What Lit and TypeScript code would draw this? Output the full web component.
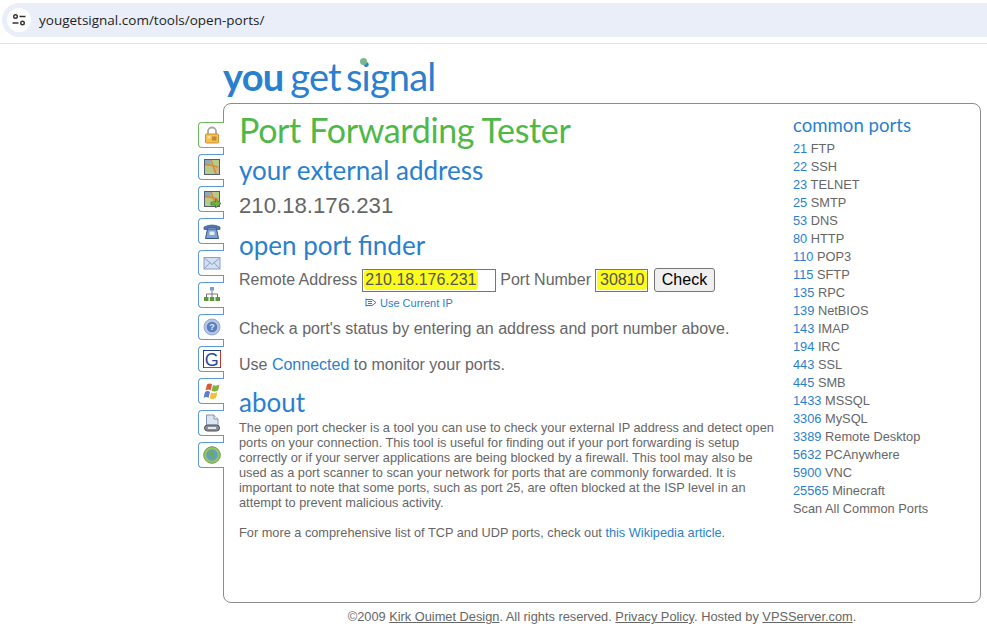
import { LitElement, html, css, svg } from 'lit';
import { customElement } from 'lit/decorators.js';

const PORTS: [string, string][] = [
  ['21', 'FTP'], ['22', 'SSH'], ['23', 'TELNET'], ['25', 'SMTP'], ['53', 'DNS'], ['80', 'HTTP'],
  ['110', 'POP3'], ['115', 'SFTP'], ['135', 'RPC'], ['139', 'NetBIOS'], ['143', 'IMAP'], ['194', 'IRC'],
  ['443', 'SSL'], ['445', 'SMB'], ['1433', 'MSSQL'], ['3306', 'MySQL'], ['3389', 'Remote Desktop'],
  ['5632', 'PCAnywhere'], ['5900', 'VNC'], ['25565', 'Minecraft'],
];

const MAP = svg`
  <rect x="1.500" y="1.500" width="15" height="15" fill="#b9c98a" stroke="#4f5f6f"/>
  <path d="M2 2h6l-1 5-5 1z" fill="#8fa8c8"/>
  <path d="M10 10l6-1v7h-5z" fill="#c9b48a"/>
  <path d="M2 6l13 3M8 2l5 14" fill="none" stroke="#d98a3a" stroke-width="1.500"/>
`;

const ICONS = [
  svg`<path d="M5 9V5.500a4 4 0 0 1 8 0V9" fill="none" stroke="#a8a8a8" stroke-width="1.800"/><rect x="2.500" y="8" width="13" height="9" rx="1" fill="#f6c050" stroke="#d0922c"/><rect x="4.500" y="10" width="3" height="2.500" fill="#fbe3a8"/><rect x="9" y="10.500" width="4.500" height="4" fill="#c08a30"/>`,
  MAP,
  svg`${MAP}<path d="M8 12h4.500V9l5.500 4.500L12.500 18v-3H8z" fill="#74b53f" stroke="#3f7a22" stroke-width=".7"/>`,
  svg`<path d="M1 7.500V5q8-4 16 0v2.500h-4V6H5v1.500z" fill="#4f78b0" stroke="#34578a" stroke-width=".7"/><path d="M4.500 7h9l2 9.500h-13z" fill="#7fa2d0" stroke="#34578a"/><rect x="6.500" y="9.500" width="5" height="3.500" fill="#e3ecf8"/>`,
  svg`<rect x="1" y="3.500" width="16" height="11.500" fill="#d3dff2" stroke="#8ba0c0"/><path d="M1.500 4l7.500 6.500L16.500 4M1.500 14.500l5.500-6M16.500 14.500l-5.500-6" fill="none" stroke="#8ba0c0"/>`,
  svg`<rect x="7" y="1" width="4" height="3.500" fill="#7f9bc0"/><path d="M9 4.500V8M3.500 11V8h11v3M9 8v3" fill="none" stroke="#777"/><rect x="1" y="11" width="4.500" height="4" fill="#5a9a3c"/><rect x="6.800" y="11" width="4.500" height="4" fill="#5a9a3c"/><rect x="12.500" y="11" width="4.500" height="4" fill="#5a9a3c"/>`,
  svg`<circle cx="9" cy="9" r="8" fill="#b4c6e6" stroke="#96abd2"/><circle cx="9" cy="9" r="5.300" fill="#5b7cc0"/><text x="9" y="12.300" font-size="9" font-weight="700" text-anchor="middle" fill="#e8eefa" font-family="Liberation Sans">?</text>`,
  svg`<rect x=".5" y=".5" width="17" height="17" fill="#fff" stroke="#23408f"/><path d="M17.500 1v16" stroke="#c0392b"/><path d="M1 17.500h16" stroke="#2d8a3a"/><text x="8.800" y="15.500" font-size="18" text-anchor="middle" fill="#2b4a9a" font-family="Liberation Sans">G</text>`,
  svg`<path d="M4 2.500q3-2 5 0L7.500 8.500q-2-2-5 0z" fill="#d9573a"/><path d="M10 3q3 1.500 6.500-.5L15 8.500q-3 1.500-6.500.5z" fill="#7fb23c"/><path d="M2 10q3-2 5 0l-1.500 6q-2-2-5 0z" fill="#5a7fc8"/><path d="M8 10.500q3 1.500 6.500-.5L13 16q-3 1.500-6.500.5z" fill="#f0c23a"/>`,
  svg`<path d="M3.500 1h7.500l4 4v8.500H3.500z" fill="#dbe5f3" stroke="#7f93b3"/><path d="M11 1v4h4" fill="#f2f6fb" stroke="#7f93b3"/><rect x="1.500" y="11" width="15" height="6" rx="3" fill="#8a8f96" stroke="#4a4f56"/><rect x="5" y="13" width="8" height="2" fill="#e5e7ea"/>`,
  svg`<circle cx="9" cy="9" r="8.300" fill="#96c564" stroke="#6f9f48"/><circle cx="9" cy="9" r="5.800" fill="#5f9fc8"/><path d="M6 5.500q3-2 5 0l-1 3 2 3-3 2-1-4-2.500-1z" fill="#6fae4a"/>`,
];

@customElement('app-root')
export class AppRoot extends LitElement {
  static styles = css`
    :host {
      display: block;
      width: 987px;
      height: 632px;
      overflow: hidden;
      background: #fff;
      color: #666;
      font-family: 'Liberation Sans', Arial, sans-serif;
      font-size: 16px;
    }

    a { color: #2a7fcf; text-decoration: none; }

    .browser-bar {
      height: 44px;
      box-sizing: border-box;
      padding: 3px 0 0 2px;
      border-bottom: 1px solid #e3e3e3;
    }

    .url {
      display: flex;
      align-items: center;
      gap: 8px;
      height: 34px;
      box-sizing: border-box;
      padding-left: 5px;
      border-radius: 17px 0 0 17px;
      background: #e9eef8;
      color: #1f1f1f;
      font-family: 'Open Sans', sans-serif;
      font-size: 13.5px;
    }

    .url-icon {
      display: flex;
      align-items: center;
      justify-content: center;
      width: 24px;
      height: 24px;
      border-radius: 50%;
      background: #fff;
    }

    .logo {
      margin: 9px 0 0 223px;
      height: 50px;
      font-family: Lato, sans-serif;
      font-size: 38px;
      line-height: 47px;
      color: #2a7fcf;
      letter-spacing: -0.8px;
      white-space: nowrap;
    }

    .logo b { font-weight: 700; margin-right: 7px; }
    .logo span + span { margin-left: 5px; }

    .signal { position: relative; }

    .signal::after {
      content: '';
      position: absolute;
      left: 14px;
      top: 5px;
      width: 7px;
      height: 7px;
      border-radius: 50%;
      background: #7ab88a;
    }

    .shell {
      display: flex;
      margin-left: 198px;
      width: 783px;
    }

    .tabs {
      display: flex;
      flex-direction: column;
      gap: 6px;
      width: 25px;
      padding-top: 19px;
    }

    .tab {
      display: flex;
      align-items: center;
      justify-content: center;
      width: 26px;
      height: 26px;
      box-sizing: border-box;
      border: 1px solid #5b9bd8;
      border-right: none;
      border-radius: 4px 0 0 4px;
      background: #fff;
      position: relative;
      z-index: 1;
    }

    .tab.active { border-color: #6cbb5a; }

    .panel {
      display: flex;
      width: 758px;
      height: 500px;
      box-sizing: border-box;
      border: 1px solid #8c8c8c;
      border-radius: 8px;
      padding: 0 0 0 15px;
    }

    .main { width: 554px; }

    h1, h2 {
      margin: 0;
      font-family: Lato, sans-serif;
      font-weight: 400;
    }

    h1 {
      color: #4fb848;
      font-size: 34px;
      line-height: 40px;
      margin-top: 6px;
      letter-spacing: -0.35px;
    }

    h2 {
      color: #2a7fcf;
      font-size: 26px;
      line-height: 32px;
    }

    h2.first { margin-top: 4px; }

    .ip { font-size: 22.2px; line-height: 34px; margin-top: 3px; }
    .finder { margin-top: 6px; }

    .form {
      display: flex;
      align-items: center;
      gap: 4px;
      margin-top: 7px;
      height: 24px;
      white-space: nowrap;
    }

    .field {
      height: 23px;
      box-sizing: border-box;
      border: 1px solid #767676;
      padding: 0 1px;
      color: #333;
      line-height: 19px;
    }

    .field.address { width: 134px; margin-left: 1px; }
    .field.port { width: 53px; }

    .field mark {
      display: inline-block;
      height: 20px;
      background: #fbfb1e;
      color: #555;
      padding: 0 1px;
      border-radius: 4px;
    }

    .field.port mark { padding: 0 3px; }

    button {
      height: 24px;
      width: 61px;
      padding: 0;
      margin-left: 2px;
      border: 1px solid #767676;
      border-radius: 3px;
      background: #efefef;
      color: #000;
      font: inherit;
    }

    .current {
      display: flex;
      align-items: center;
      gap: 3px;
      margin: 3px 0 0 126px;
      height: 15px;
      font-size: 11px;
    }

    p { margin: 0; }

    .status { margin-top: 9px; line-height: 20px; }
    .monitor { margin-top: 16px; line-height: 20px; }
    .about { margin-top: 11px; }

    .copy {
      font-size: 12.75px;
      line-height: 15px;
      width: 540px;
      margin-top: 2px;
    }

    .copy + .copy { margin-top: 15px; }

    .side { padding-top: 10px; }

    .side h3 {
      margin: 0 0 4px;
      font-family: Lato, sans-serif;
      font-weight: 400;
      font-size: 18.6px;
      line-height: 22px;
      color: #2a7fcf;
    }

    .ports {
      margin: 0;
      padding: 0;
      list-style: none;
      font-size: 12.8px;
      line-height: 18px;
    }

    footer {
      margin-left: 223px;
      width: 758px;
      padding-top: 5px;
      text-align: center;
      font-size: 12.8px;
      line-height: 18px;
    }

    footer a { color: #666; text-decoration: underline; }
  `;

  render() {
    return html`
      <div class="browser-bar">
        <div class="url">
          <span class="url-icon">
            <svg width="16" height="16" viewBox="0 0 16 16" fill="none" stroke="#333" stroke-width="1.400">
              <circle cx="4.500" cy="4.500" r="1.800"/><path d="M8.500 4.500h6M1.500 11h6"/><circle cx="11.500" cy="11" r="1.800"/>
            </svg>
          </span>
          <span>yougetsignal.com/tools/open-ports/</span>
        </div>
      </div>
      <div class="logo"><b>you</b><span>get</span><span class="signal">signal</span></div>
      <div class="shell">
        <nav class="tabs">
          ${ICONS.map((icon, i) => html`
            <div class="tab ${i === 0 ? 'active' : ''}">
              <svg width="18" height="18" viewBox="0 0 18 18">${icon}</svg>
            </div>
          `)}
        </nav>
        <div class="panel">
          <div class="main">
            <h1>Port Forwarding Tester</h1>
            <h2 class="first">your external address</h2>
            <div class="ip">210.18.176.231</div>
            <h2 class="finder">open port finder</h2>
            <div class="form">
              <span>Remote Address</span>
              <div class="field address"><mark>210.18.176.231</mark></div>
              <span>Port Number</span>
              <div class="field port"><mark>30810</mark></div>
              <button>Check</button>
            </div>
            <a class="current" href="#">
              <svg width="12" height="9" viewBox="0 0 12 9" fill="none" stroke="#2a7fcf"><path d="M1 .5v8M1 1.500h6l4 3-4 3H1M3 3.500h4M3 5.500h4"/></svg>
              Use Current IP
            </a>
            <p class="status">Check a port's status by entering an address and port number above.</p>
            <p class="monitor">Use <a href="#">Connected</a> to monitor your ports.</p>
            <h2 class="about">about</h2>
            <p class="copy">The open port checker is a tool you can use to check your external IP address and detect open ports on your connection. This tool is useful for finding out if your port forwarding is setup correctly or if your server applications are being blocked by a firewall. This tool may also be used as a port scanner to scan your network for ports that are commonly forwarded. It is important to note that some ports, such as port 25, are often blocked at the ISP level in an attempt to prevent malicious activity.</p>
            <p class="copy">For more a comprehensive list of TCP and UDP ports, check out <a href="#">this Wikipedia article</a>.</p>
          </div>
          <aside class="side">
            <h3>common ports</h3>
            <ul class="ports">
              ${PORTS.map(([port, name]) => html`<li><a href="#">${port}</a> ${name}</li>`)}
              <li>Scan All Common Ports</li>
            </ul>
          </aside>
        </div>
      </div>
      <footer>©2009 <a href="#">Kirk Ouimet Design</a>. All rights reserved. <a href="#">Privacy Policy</a>. Hosted by <a href="#">VPSServer.com</a>.</footer>
    `;
  }
}
